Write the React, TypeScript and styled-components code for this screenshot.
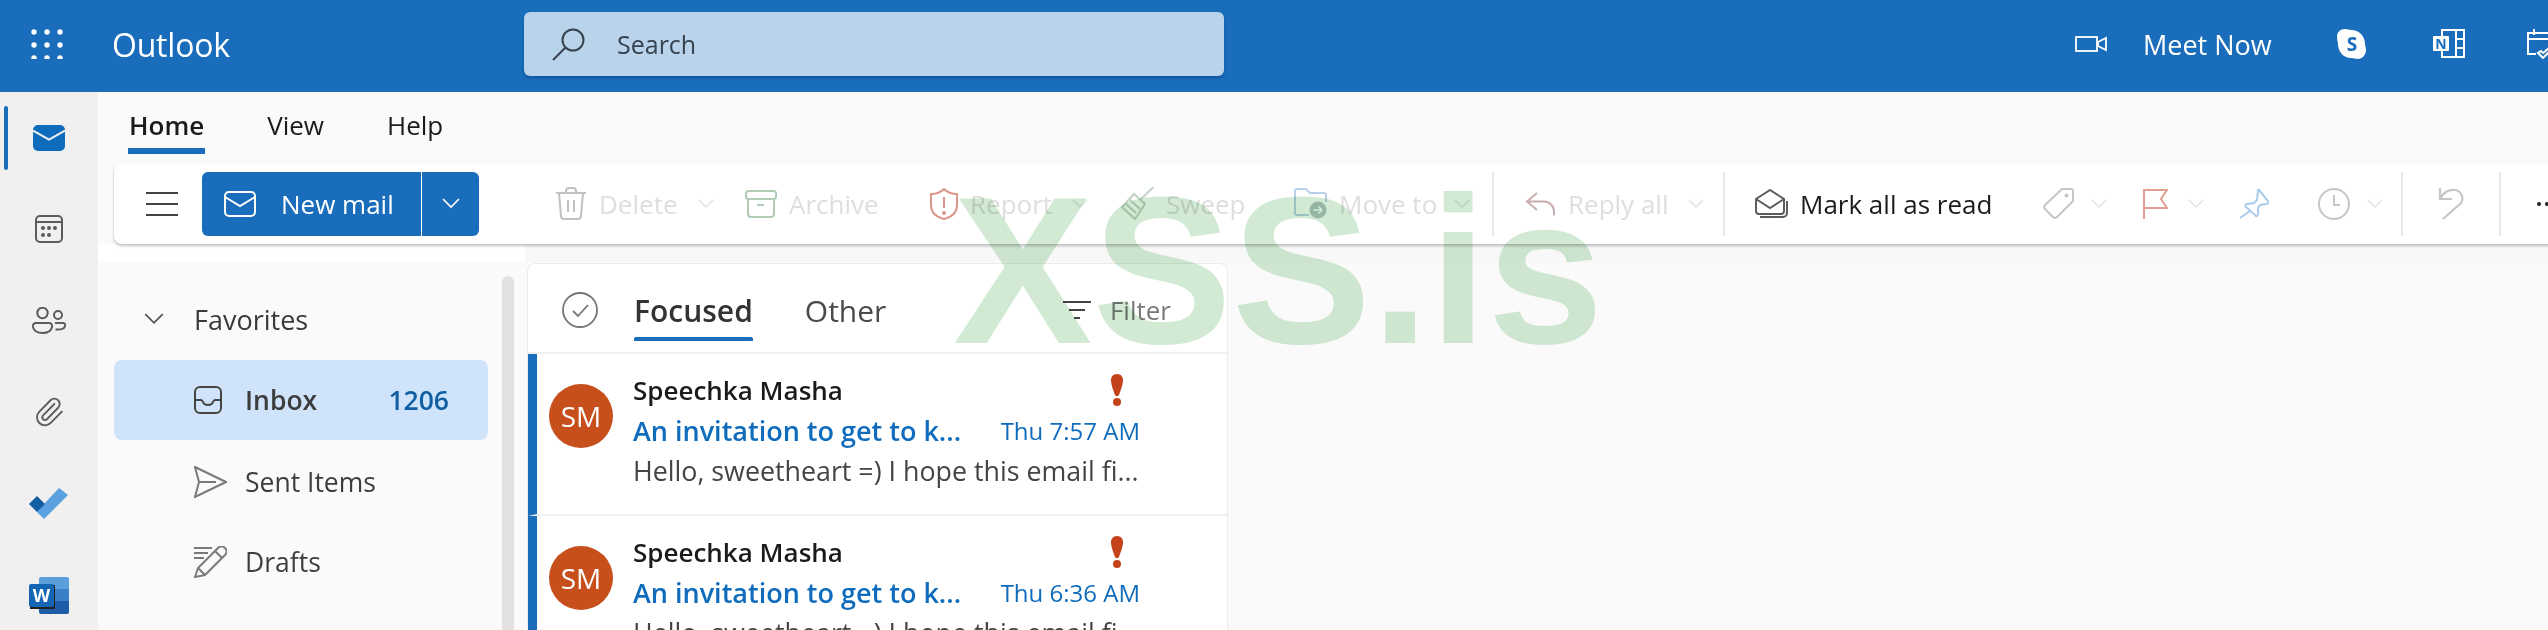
import React from 'react';
import styled, { createGlobalStyle } from 'styled-components';
import { Paperclip } from 'lucide-react';

const GlobalStyle = createGlobalStyle`
    html, body { margin: 0; padding: 0; background: #fafafa; }
    * { box-sizing: border-box; }
    body { font-family: "Open Sans", "Noto Sans", sans-serif; }
`;

const BLUE = '#196dba';

const Page = styled.div`
    position: relative;
    width: 2548px;
    height: 630px;
    overflow: hidden;
    background: #fafafa;
`;

const Watermark = styled.div`
    position: absolute;
    left: 953px;
    top: 166px;
    font: bold 209px/1 "Liberation Sans", Arial, sans-serif;
    color: #d2ead4;
    mix-blend-mode: multiply;
    pointer-events: none;
    white-space: nowrap;
`;

const Header = styled.header`
    display: flex;
    align-items: center;
    height: 92px;
    padding: 0 0 4px 31px;
    background: ${BLUE};
    color: #fff;
    overflow: hidden;
`;

const Brand = styled.div`
    display: flex;
    align-items: center;
    flex: 0 0 493px;
    gap: 49px;
`;

const BrandName = styled.span`
    font-size: 32px;
    font-weight: 500;
    letter-spacing: -0.2px;
`;

const SearchBox = styled.div`
    display: flex;
    align-items: center;
    flex: 0 0 700px;
    height: 64px;
    padding-left: 28px;
    gap: 32px;
    border-radius: 6px;
    background: #b9d3ea;
    color: #36424e;
    font-size: 25px;
    box-shadow: 0 2px 3px rgba(0, 40, 110, 0.35);
`;

const HeaderTools = styled.div`
    display: flex;
    align-items: center;
    flex: none;
    margin-left: 851px;
`;

const HeaderSlot = styled.div<{ $w: number }>`
    display: flex;
    align-items: center;
    flex: 0 0 ${p => p.$w}px;
`;

const MeetNow = styled.span`
    font-size: 27px;
    white-space: nowrap;
`;

const Body = styled.div`
    display: flex;
    height: 538px;
`;

const Rail = styled.nav`
    flex: 0 0 98px;
    background: #f0f0f0;
`;

const RailSlot = styled.div`
    position: relative;
    display: flex;
    align-items: center;
    justify-content: center;
    height: 91.5px;
    color: #5c5c5c;
`;

const ActiveBar = styled.span`
    position: absolute;
    left: 4px;
    top: 14px;
    width: 4px;
    height: 64px;
    border-radius: 2px;
    background: ${BLUE};
`;

const Main = styled.div`
    flex: 1;
    min-width: 0;
`;

const Tabs = styled.div`
    display: flex;
    height: 71px;
    padding-left: 30px;
    gap: 61px;
`;

const Tab = styled.div<{ $active?: boolean }>`
    height: 62px;
    padding: 0 1px;
    line-height: 66px;
    font-size: 26px;
    font-weight: ${p => (p.$active ? 600 : 400)};
    color: #1b1b1b;
    border-bottom: ${p => (p.$active ? `6px solid ${BLUE}` : 'none')};
`;

const Toolbar = styled.div`
    display: flex;
    align-items: center;
    height: 81px;
    margin: 0 -60px 0 16px;
    padding-left: 32px;
    border-radius: 8px;
    background: #fff;
    box-shadow: 0 2px 3px rgba(0, 0, 0, 0.24);
    position: relative;
`;

const Hamburger = styled.svg`
    flex: none;
    margin-right: 24px;
`;

const NewMail = styled.div`
    display: flex;
    flex: none;
    height: 64px;
    width: 277px;
    margin-right: 76px;
    border-radius: 6px;
    overflow: hidden;
    background: ${BLUE};
    color: #fff;
    font-size: 26px;
`;

const NewMailMain = styled.div`
    display: flex;
    align-items: center;
    flex: 0 0 220px;
    padding-left: 22px;
    gap: 25px;
    white-space: nowrap;
    border-right: 1px solid #fff;
`;

const NewMailArrow = styled.div`
    display: flex;
    align-items: center;
    justify-content: center;
    flex: 1;
`;

const ToolItem = styled.div<{ $w: number; $off?: boolean }>`
    display: flex;
    align-items: center;
    flex: 0 0 ${p => p.$w}px;
    gap: 12px;
    font-size: 26px;
    white-space: nowrap;
    color: ${p => (p.$off ? '#dedede' : '#1b1b1b')};
`;

const Caret = styled.svg<{ $near?: boolean }>`
    flex: none;
    margin-left: ${p => (p.$near ? 5 : 8)}px;
`;

const VLine = styled.div<{ $w: number }>`
    flex: 0 0 ${p => p.$w}px;
    height: 64px;
    &::before {
        content: '';
        display: block;
        width: 2px;
        height: 100%;
        background: #e8e8e8;
    }
`;

const Strip = styled.div`
    display: flex;
    height: 18px;
    background: #f8f8f8;
`;

const StripLeft = styled.div`
    width: 427px;
    background: #fff;
`;

const Panes = styled.div`
    display: flex;
    height: 400px;
`;

const Sidebar = styled.aside`
    display: flex;
    flex: 0 0 427px;
    background: #fafafa;
`;

const NavList = styled.div`
    flex: 0 0 404px;
    padding: 18px 0 0 16px;
`;

const Thumb = styled.div`
    flex: 0 0 12px;
    margin-top: 14px;
    border-radius: 6px 6px 0 0;
    background: #e1e1e1;
`;

const FavoritesRow = styled.div`
    display: flex;
    align-items: center;
    height: 78px;
    margin-bottom: 2px;
    padding-left: 30px;
    gap: 30px;
    font-size: 27px;
    font-weight: 500;
    color: #3a3a3a;
`;

const NavRow = styled.div<{ $selected?: boolean }>`
    display: flex;
    align-items: center;
    width: 374px;
    height: 80px;
    margin-bottom: ${p => (p.$selected ? 2 : 0)}px;
    padding: 0 39px 0 80px;
    border-radius: 8px;
    background: ${p => (p.$selected ? '#cfe4fa' : 'transparent')};
    font-size: 26.5px;
    font-weight: ${p => (p.$selected ? 600 : 400)};
    color: #3d3d3d;
`;

const NavIcon = styled.span`
    display: flex;
    align-items: center;
    flex: 0 0 51px;
`;

const Count = styled.span`
    margin-left: auto;
    color: #115ea3;
`;

const ListCard = styled.section`
    flex: 0 0 701px;
    margin: 1px 0 0 2px;
    border: 1px solid #ececec;
    border-bottom: 0;
    border-radius: 8px 8px 0 0;
    background: #fff;
`;

const ListHead = styled.div`
    display: flex;
    align-items: center;
    height: 90px;
    padding: 4px 56px 0 34px;
    border-bottom: 2px solid #f0f0f0;
`;

const PivotTab = styled.div<{ $active?: boolean }>`
    position: relative;
    margin-left: ${p => (p.$active ? 36 : 52)}px;
    font-size: 30px;
    font-weight: ${p => (p.$active ? 600 : 400)};
    color: ${p => (p.$active ? '#333' : '#4a4a4a')};
    &::after {
        content: '';
        display: ${p => (p.$active ? 'block' : 'none')};
        position: absolute;
        left: 0;
        right: 0;
        bottom: -10px;
        height: 4px;
        border-radius: 2px 2px 0 0;
        background: ${BLUE};
    }
`;

const FilterBox = styled.div`
    display: flex;
    align-items: center;
    gap: 19px;
    margin-left: auto;
    font-size: 26px;
    color: #7a7a7a;
`;

const MailRow = styled.article`
    display: flex;
    height: 162px;
    border-left: 9px solid ${BLUE};
    border-bottom: 2px solid #f0f0f0;
`;

const Avatar = styled.div`
    display: flex;
    align-items: center;
    justify-content: center;
    flex: 0 0 64px;
    height: 64px;
    margin: 30px 20px 0 12px;
    border-radius: 50%;
    background: #c64f1c;
    color: #fff;
    font-size: 28px;
`;

const MailText = styled.div`
    flex: 0 0 507px;
    padding-top: 16px;
`;

const MailLine = styled.div`
    display: flex;
    align-items: center;
    justify-content: space-between;
    height: 40px;
    white-space: nowrap;
`;

const Sender = styled.span`
    font-size: 26px;
    font-weight: 600;
    color: #1b1b1b;
`;

const Exclaim = styled.svg`
    margin-right: 16px;
`;

const Subject = styled.span`
    font-size: 27px;
    font-weight: 600;
    color: #0f6cbd;
`;

const Time = styled.span`
    font-size: 24px;
    font-weight: 500;
    color: #0f6cbd;
`;

const Preview = styled.span`
    font-size: 26.8px;
    color: #444;
`;

const Chev = ({ color = '#fff', w = 18 }: { color?: string; w?: number }) => (
    <svg width={w} height={w / 2 + 2} viewBox="0 0 18 11" fill="none" stroke={color} strokeWidth="1.6">
        <path d="M1 1l8 8 8-8" />
    </svg>
);

const ToolCaret = ({ near }: { near?: boolean }) => (
    <Caret $near={near} width="16" height="9" viewBox="0 0 16 9" fill="none" stroke="#e2e2e2" strokeWidth="1.5">
        <path d="M1 1l7 7 7-7" />
    </Caret>
);

const Waffle = () => (
    <svg width="32" height="30" viewBox="0 0 32 30" fill="#fff">
        {[3, 16, 29].map(y => [3, 16, 29].map(x => <circle key={`${x}-${y}`} cx={x} cy={y} r="2.7" />))}
    </svg>
);

const SearchIcon = () => (
    <svg width="33" height="33" viewBox="0 0 33 33" fill="none" stroke="#36424e" strokeWidth="2">
        <circle cx="21" cy="12" r="10.5" />
        <path d="M13.5 19.5L1 32" />
    </svg>
);

const VideoIcon = () => (
    <svg width="32" height="16" viewBox="0 0 32 16" fill="none" stroke="#fff" strokeWidth="1.8">
        <rect x="1" y="1" width="21" height="14" />
        <path d="M23 6l8-4v12l-8-4z" />
    </svg>
);

const SkypeIcon = () => (
    <svg width="30" height="30" viewBox="0 0 30 30">
        <path fill="#fff" d="M8 0c2.500 0 4 1 6 1 8 0 14 6 14 14 0 2 1 3 1 6 0 5-4 9-8 9-2.500 0-4-1-7-1C6 29 1 22 1 15c0-2-1-4-1-7 0-5 3-8 8-8z" />
        <text x="15" y="22" textAnchor="middle" fontFamily="'Open Sans', sans-serif" fontWeight="700" fontSize="19" fill={BLUE}>S</text>
    </svg>
);

const OneNoteIcon = () => (
    <svg width="32" height="30" viewBox="0 0 32 30">
        <path fill="none" stroke="#fff" strokeWidth="2" d="M9 1h22v27H9zM23 1v27M23 10h8M23 19h8" />
        <rect x="0" y="7" width="16" height="15" rx="1" fill="#fff" />
        <text x="8" y="20" textAnchor="middle" fontFamily="'Open Sans', sans-serif" fontWeight="700" fontSize="14" fill={BLUE}>N</text>
    </svg>
);

const CalendarCheckIcon = () => (
    <svg width="32" height="30" viewBox="0 0 32 30" fill="none" stroke="#fff" strokeWidth="2">
        <path d="M9 25H1V4h30v12M1 10h30M7 0v6M25 0v6" />
        <path d="M11 24l5 5 8-8-2-2-6 5-2-2z" />
    </svg>
);

const MailFilled = () => (
    <svg width="32" height="26" viewBox="0 0 32 26">
        <rect width="32" height="26" rx="5" fill="#0f6cbd" />
        <path d="M0 5.500l16 9 16-9" fill="none" stroke="#f0f0f0" strokeWidth="2" />
    </svg>
);

const CalendarIcon = () => (
    <svg width="28" height="28" viewBox="0 0 28 28" fill="none" stroke="#5c5c5c" strokeWidth="2">
        <rect x="1" y="1" width="26" height="26" rx="4" />
        <path d="M1 7h26" />
        <g fill="#5c5c5c" stroke="none">
            <circle cx="8" cy="13" r="2" />
            <circle cx="14" cy="13" r="2" />
            <circle cx="20" cy="13" r="2" />
            <circle cx="8" cy="20" r="2" />
            <circle cx="14" cy="20" r="2" />
        </g>
    </svg>
);

const PeopleIcon = () => (
    <svg width="34" height="27" viewBox="0 0 34 27" fill="none" stroke="#5c5c5c" strokeWidth="2">
        <circle cx="10.500" cy="6" r="5.200" />
        <path d="M4 16h13c2 0 3.500 1.500 3 4-.8 4-5 6-9.500 6S2 24 1 20c-.5-2.500 1-4 3-4z" />
        <circle cx="26" cy="8" r="4" />
        <path d="M23 16h8c1.500 0 2.500 1 2 3-.6 2.500-4 4-9.500 3.500" />
    </svg>
);

const TodoIcon = () => (
    <svg width="40" height="31" viewBox="0 0 40 31">
        <path fill="#5ba0df" d="M8 24l7 7 24-24-9-7-15 16-3 3z" />
        <path fill="#115ea3" d="M0 16l8-8 8 8-8 8z" />
    </svg>
);

const WordIcon = () => (
    <svg width="40" height="37" viewBox="0 0 40 37">
        <path fill="#5a9fdc" d="M12 0h26a2 2 0 0 1 2 2v10H10V2a2 2 0 0 1 2-2z" />
        <rect x="10" y="12" width="30" height="12" fill="#3a80c6" />
        <path fill="#1e5ea8" d="M10 24h30v11a2 2 0 0 1-2 2H12a2 2 0 0 1-2-2z" />
        <rect x="1" y="8" width="25" height="24" fill="#222" />
        <rect x="0" y="7" width="25" height="23" rx="2" fill="#1565b5" />
        <text x="12.500" y="25" textAnchor="middle" fontFamily="'Open Sans', sans-serif" fontWeight="700" fontSize="18" fill="#fff">W</text>
    </svg>
);

const EnvelopeIcon = () => (
    <svg width="32" height="26" viewBox="0 0 32 26" fill="none" stroke="#fff" strokeWidth="2">
        <rect x="1" y="1" width="30" height="24" rx="4" />
        <path d="M1 6l15 9 15-9" />
    </svg>
);

const TrashIcon = () => (
    <svg width="32" height="33" viewBox="0 0 32 33" fill="none" stroke="#c4c0c2" strokeWidth="2">
        <path d="M1 6h30M11 6V4a3 3 0 0 1 3-3h4a3 3 0 0 1 3 3v2" />
        <path d="M4 6l2 23a3 3 0 0 0 3 3h14a3 3 0 0 0 3-3l2-23M13 13v12M19 13v12" />
    </svg>
);

const ArchiveIcon = () => (
    <svg width="32" height="28" viewBox="0 0 32 28" fill="none" stroke="#b0ccb4" strokeWidth="2">
        <rect x="1" y="1" width="30" height="8" rx="2.500" />
        <path d="M3 9v15a3 3 0 0 0 3 3h20a3 3 0 0 0 3-3V9M12 15h7" />
    </svg>
);

const ShieldIcon = () => (
    <svg width="28" height="32" viewBox="0 0 28 32" fill="none" stroke="#d9988a" strokeWidth="2">
        <path d="M14 1c4 4 8 5 13 5v11c0 7-5 12-13 14C6 29 1 24 1 17V6c5 0 9-1 13-5z" />
        <path d="M14 9v11" />
        <circle cx="14" cy="25" r="1" />
    </svg>
);

const SweepIcon = () => (
    <svg width="33" height="33" viewBox="0 0 33 33" fill="none" stroke="#c3d3c4" strokeWidth="2">
        <path d="M32.500 0L19 13" />
        <path d="M13 7l11 10-10 15L1 20z" />
        <path d="M8 12l11 10M5 17l10 9" />
    </svg>
);

const MoveIcon = () => (
    <svg width="33" height="32" viewBox="0 0 33 32" fill="none">
        <path stroke="#b9d2ea" strokeWidth="2" d="M15 27H3a2 2 0 0 1-2-2V3a2 2 0 0 1 2-2h9l4 4h14a2 2 0 0 1 2 2v7" />
        <circle cx="24" cy="22" r="8.500" fill="#b5c7c7" />
        <path stroke="#fff" strokeWidth="1.600" d="M19.500 22h8M24.500 18.500l3.500 3.500-3.500 3.500" />
    </svg>
);

const ReplyIcon = () => (
    <svg width="31" height="24" viewBox="0 0 31 24" fill="none" stroke="#c8aeae" strokeWidth="2">
        <path d="M12 1L2 9.500l10 8.500M2 9.500h17a10 10 0 0 1 10 10v4" />
    </svg>
);

const MarkReadIcon = () => (
    <svg width="33" height="29" viewBox="0 0 33 29" fill="none" stroke="#5c5c5c" strokeWidth="2">
        <path d="M1 10L15 1l14 9v12a3 3 0 0 1-3 3H4a3 3 0 0 1-3-3z" />
        <path d="M1 10l14 9 14-9" />
        <path d="M5 28h23a4 4 0 0 0 4-4V12" />
    </svg>
);

const TagIcon = () => (
    <svg width="31" height="31" viewBox="0 0 31 31" fill="none" stroke="#c6c6c6" strokeWidth="2">
        <path d="M19 1h9a2 2 0 0 1 2 2v10L14 29a3 3 0 0 1-4 0l-8-8a3 3 0 0 1 0-4z" />
        <circle cx="23.500" cy="7.500" r="1" fill="#c6c6c6" />
    </svg>
);

const FlagIcon = () => (
    <svg width="25" height="30" viewBox="0 0 25 30" fill="none" stroke="#e0a090" strokeWidth="2">
        <path d="M1 0v30M1 1h23l-6 9 6 9H1" />
    </svg>
);

const PinIcon = () => (
    <svg width="29" height="30" viewBox="0 0 29 30" fill="none" stroke="#a8cbec" strokeWidth="2">
        <path d="M19 1l9 11c1 2 0 3-2 3l-6 1-2 3v6c0 2-2 3-3 1l-9-8c-1-1-1-3 1-3l7-1 3-3 1-9c0-2 1-2 1-2z" />
        <path d="M10 22L0 29" />
    </svg>
);

const ClockIcon = () => (
    <svg width="32" height="32" viewBox="0 0 32 32" fill="none" stroke="#c6c6c6" strokeWidth="2">
        <circle cx="16" cy="16" r="15" />
        <path d="M16 7v10h6" />
    </svg>
);

const UndoIcon = () => (
    <svg width="26" height="32" viewBox="0 0 26 32" fill="none" stroke="#c6c6c6" strokeWidth="2.200">
        <path d="M2 0v11h12" />
        <path d="M2 11C5 4 12 1 17 2c7 1 9 9 6 13L5 31" />
    </svg>
);

const DotsIcon = () => (
    <svg width="20" height="6" viewBox="0 0 20 6" fill="#222">
        <circle cx="3" cy="3" r="2" />
        <circle cx="11" cy="3" r="2" />
        <circle cx="19" cy="3" r="2" />
    </svg>
);

const InboxIcon = () => (
    <svg width="28" height="28" viewBox="0 0 28 28" fill="none" stroke="#444" strokeWidth="2">
        <rect x="1" y="1" width="26" height="26" rx="5" />
        <path d="M1 14h6c1 0 1.500.5 2 2 .5 1.500 2.500 3 5 3s4.500-1.500 5-3c.5-1.500 1-2 2-2h6" />
    </svg>
);

const SentIcon = () => (
    <svg width="33" height="32" viewBox="0 0 33 32" fill="none" stroke="#7a7a7a" strokeWidth="2">
        <path d="M1 1l31 15L1 31l4-15zM5 16h17" />
    </svg>
);

const DraftsIcon = () => (
    <svg width="33" height="32" viewBox="0 0 33 32" fill="none" stroke="#7a7a7a" strokeWidth="2">
        <path d="M0 2h18M0 7h14M0 12h10" />
        <path d="M1 31l3-9L24 2c2-2 5-2 7 0s2 5 0 7L11 29zM4 22l7 7M21 5l7 7" />
    </svg>
);

const CheckCircle = () => (
    <svg width="36" height="36" viewBox="0 0 36 36" fill="none" stroke="#777" strokeWidth="1.800">
        <circle cx="18" cy="18" r="17" />
        <path d="M11 19l5 5 10-11" />
    </svg>
);

const FilterIcon = () => (
    <svg width="28" height="18" viewBox="0 0 28 18" fill="none" stroke="#444" strokeWidth="2">
        <path d="M0 1h28M6 9h16M11 17h6" />
    </svg>
);

const ExclaimIcon = () => (
    <Exclaim width="14" height="32" viewBox="0 0 14 32">
        <path fill="#c4421a" d="M7 0c4 0 6 3 6 6 0 5-3 12-4 15-.6 1.500-3.400 1.500-4 0C4 18 1 11 1 6c0-3 2-6 6-6z" />
        <circle cx="7" cy="28" r="4" fill="#c4421a" />
    </Exclaim>
);

const MailItem = ({ time }: { time: string }) => (
    <MailRow>
        <Avatar>SM</Avatar>
        <MailText>
            <MailLine>
                <Sender>Speechka Masha</Sender>
                <ExclaimIcon />
            </MailLine>
            <MailLine>
                <Subject>An invitation to get to k...</Subject>
                <Time>{time}</Time>
            </MailLine>
            <MailLine>
                <Preview>Hello, sweetheart =) I hope this email fi...</Preview>
            </MailLine>
        </MailText>
    </MailRow>
);

export default function App() {
    return (
        <Page>
            <GlobalStyle />
            <Header>
                <Brand>
                    <Waffle />
                    <BrandName>Outlook</BrandName>
                </Brand>
                <SearchBox>
                    <SearchIcon />
                    Search
                </SearchBox>
                <HeaderTools>
                    <HeaderSlot $w={68}><VideoIcon /></HeaderSlot>
                    <HeaderSlot $w={194}><MeetNow>Meet Now</MeetNow></HeaderSlot>
                    <HeaderSlot $w={96}><SkypeIcon /></HeaderSlot>
                    <HeaderSlot $w={94}><OneNoteIcon /></HeaderSlot>
                    <HeaderSlot $w={32}><CalendarCheckIcon /></HeaderSlot>
                </HeaderTools>
            </Header>
            <Body>
                <Rail>
                    <RailSlot><ActiveBar /><MailFilled /></RailSlot>
                    <RailSlot><CalendarIcon /></RailSlot>
                    <RailSlot><PeopleIcon /></RailSlot>
                    <RailSlot><Paperclip size={32} strokeWidth={1.4} /></RailSlot>
                    <RailSlot><TodoIcon /></RailSlot>
                    <RailSlot><WordIcon /></RailSlot>
                </Rail>
                <Main>
                    <Tabs>
                        <Tab $active>Home</Tab>
                        <Tab>View</Tab>
                        <Tab>Help</Tab>
                    </Tabs>
                    <Toolbar>
                        <Hamburger width="32" height="24" viewBox="0 0 32 24" stroke="#444" strokeWidth="2">
                            <path d="M0 1h32M0 12h32M0 23h32" />
                        </Hamburger>
                        <NewMail>
                            <NewMailMain>
                                <EnvelopeIcon />
                                New mail
                            </NewMailMain>
                            <NewMailArrow><Chev /></NewMailArrow>
                        </NewMail>
                        <ToolItem $w={190} $off><TrashIcon />Delete<ToolCaret /></ToolItem>
                        <ToolItem $w={185} $off><ArchiveIcon />Archive</ToolItem>
                        <ToolItem $w={191} $off><ShieldIcon />Report<ToolCaret /></ToolItem>
                        <ToolItem $w={173} $off><SweepIcon />Sweep</ToolItem>
                        <ToolItem $w={198} $off><MoveIcon />Move to<ToolCaret near /></ToolItem>
                        <VLine $w={33} />
                        <ToolItem $w={198} $off><ReplyIcon />Reply all<ToolCaret /></ToolItem>
                        <VLine $w={32} />
                        <ToolItem $w={288}><MarkReadIcon />Mark all as read</ToolItem>
                        <ToolItem $w={100}><TagIcon /><ToolCaret near /></ToolItem>
                        <ToolItem $w={97}><FlagIcon /><ToolCaret /></ToolItem>
                        <ToolItem $w={78}><PinIcon /></ToolItem>
                        <ToolItem $w={83}><ClockIcon /><ToolCaret near /></ToolItem>
                        <VLine $w={37} />
                        <ToolItem $w={61}><UndoIcon /></ToolItem>
                        <VLine $w={37} />
                        <ToolItem $w={30}><DotsIcon /></ToolItem>
                    </Toolbar>
                    <Strip><StripLeft /></Strip>
                    <Panes>
                        <Sidebar>
                            <NavList>
                                <FavoritesRow><Chev color="#555" w={20} />Favorites</FavoritesRow>
                                <NavRow $selected>
                                    <NavIcon><InboxIcon /></NavIcon>
                                    Inbox
                                    <Count>1206</Count>
                                </NavRow>
                                <NavRow><NavIcon><SentIcon /></NavIcon>Sent Items</NavRow>
                                <NavRow><NavIcon><DraftsIcon /></NavIcon>Drafts</NavRow>
                            </NavList>
                            <Thumb />
                        </Sidebar>
                        <ListCard>
                            <ListHead>
                                <CheckCircle />
                                <PivotTab $active>Focused</PivotTab>
                                <PivotTab>Other</PivotTab>
                                <FilterBox><FilterIcon />Filter</FilterBox>
                            </ListHead>
                            <MailItem time="Thu 7:57 AM" />
                            <MailItem time="Thu 6:36 AM" />
                        </ListCard>
                    </Panes>
                </Main>
            </Body>
            <Watermark>XSS.is</Watermark>
        </Page>
    );
}
